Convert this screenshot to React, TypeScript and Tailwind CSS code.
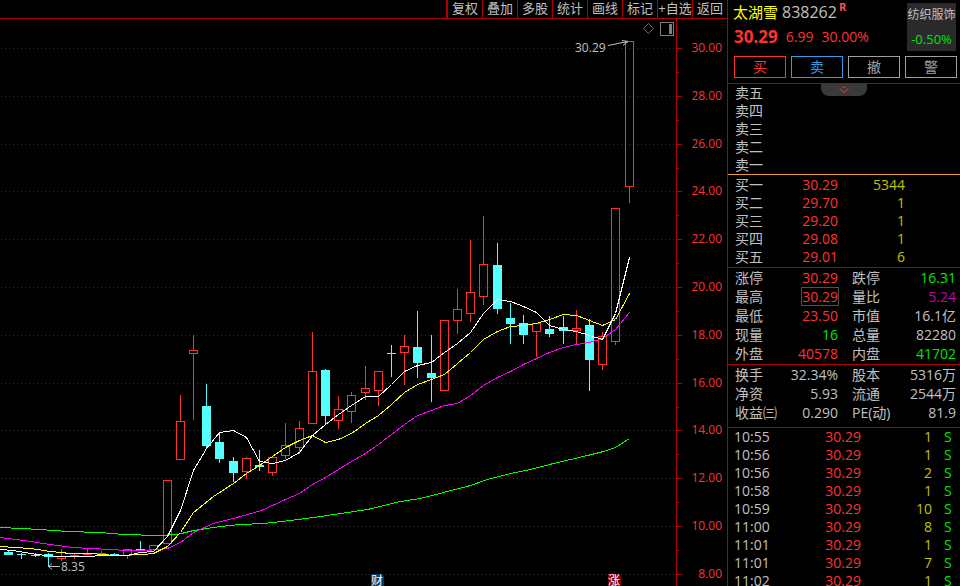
import React from "react";

type Candle = {
  x: number;
  high: number;
  low: number;
  top: number;
  bottom: number;
  up: boolean;
};

type Quote = { label: string; price?: string; volume?: string };

type Stat = { label: string; value: string; color: string; boxed?: boolean };

const UP = "#ff3232";
const DOWN = "#54ffff";
const AXIS = "#b00000";

// x, high, low, body top, body bottom, up
const rawCandles: [number, number, number, number, number, number][] = [
  [8, 551, 555, 552, 555, 0],
  [21, 553, 559, 554, 555, 0],
  [35, 553, 557, 555, 556, 0],
  [48, 553, 567, 554, 557, 0],
  [61, 549, 561, 556, 559, 1],
  [74, 553, 559, 555, 556, 1],
  [87, 549, 555, 554, 555, 1],
  [101, 551, 555, 553, 554, 1],
  [114, 553, 556, 554, 555, 0],
  [127, 549, 559, 549, 556, 1],
  [140, 541, 550, 549, 550, 0],
  [153, 545, 550, 545, 550, 1],
  [167, 480, 544, 480, 544, 1],
  [180, 395, 460, 421, 460, 1],
  [193, 335, 420, 350, 354, 1],
  [206, 384, 448, 406, 446, 0],
  [219, 433, 463, 442, 459, 0],
  [233, 457, 482, 461, 473, 0],
  [246, 457, 479, 458, 472, 1],
  [259, 450, 471, 465, 467, 0],
  [272, 457, 476, 457, 473, 1],
  [285, 423, 459, 445, 456, 1],
  [299, 421, 454, 428, 448, 1],
  [312, 332, 424, 371, 424, 1],
  [325, 369, 424, 370, 416, 0],
  [338, 396, 429, 409, 421, 1],
  [351, 392, 423, 395, 412, 1],
  [365, 366, 400, 388, 393, 1],
  [378, 371, 406, 371, 391, 1],
  [391, 345, 377, 353, 354, 0],
  [404, 335, 385, 346, 353, 1],
  [417, 311, 378, 347, 363, 0],
  [431, 335, 402, 373, 378, 0],
  [444, 320, 391, 320, 391, 1],
  [457, 289, 334, 309, 321, 1],
  [470, 240, 322, 292, 314, 1],
  [483, 216, 305, 264, 297, 1],
  [497, 243, 314, 265, 309, 0],
  [510, 303, 344, 318, 324, 0],
  [523, 315, 344, 323, 335, 0],
  [536, 323, 357, 323, 332, 1],
  [549, 316, 337, 329, 334, 0],
  [563, 316, 344, 327, 331, 0],
  [576, 310, 344, 328, 331, 1],
  [589, 319, 391, 325, 360, 0],
  [602, 332, 370, 336, 365, 1],
  [615, 208, 345, 208, 342, 1],
  [629, 41, 203, 41, 187, 1],
];

const candles: Candle[] = rawCandles.map(([x, high, low, top, bottom, up]) => ({
  x,
  high,
  low,
  top,
  bottom,
  up: up === 1,
}));

const averages = [
  {
    color: "#00ff00",
    points:
      "0,527 40,529 67,531 100,532 123,534 157,535 177,534 193,530 220,526 240,524 263,523 290,520 320,516 340,513 367,509 400,501 420,498 443,492 470,485 487,479 510,473 530,469 553,463 587,455 603,451 615,447 629,438",
  },
  {
    color: "#ff00ff",
    points:
      "0,537 23,540 50,544 72,547 110,549 127,550 147,550 167,548 180,542 193,532 213,523 240,516 261,510 285,499 299,493 312,484 325,477 338,469 351,461 365,453 378,444 391,434 404,424 417,415 431,410 444,405 457,403 470,395 483,385 497,377 510,371 523,364 536,358 549,352 563,347 576,344 589,342 602,338 615,329 629,312",
  },
  {
    color: "#ffff00",
    points:
      "0,546 30,548 50,551 70,553 90,553 114,555 143,554 153,553 167,546 180,532 193,512 213,496 233,483 246,473 259,465 272,456 285,447 299,440 312,435 325,442 338,439 351,433 365,423 378,415 391,404 404,392 417,384 431,379 444,374 457,363 470,352 483,339 497,331 510,326 523,325 536,323 549,319 563,314 576,315 589,320 602,325 615,319 629,293",
  },
  {
    color: "#ffffff",
    points:
      "0,549 13,550 30,553 45,555 60,556 80,556 110,555 127,555 140,552 153,551 167,536 180,510 193,470 206,448 219,432 233,430 246,437 259,461 272,463 285,460 299,452 312,435 325,424 338,414 351,405 365,396 378,396 391,384 404,371 417,365 431,362 444,352 457,343 470,332 483,313 497,299 510,301 523,306 536,312 549,325 563,329 576,331 589,335 602,339 615,313 629,257",
  },
];

const gridLines = [
  { y: 48, label: "30.00" },
  { y: 96, label: "28.00" },
  { y: 144, label: "26.00" },
  { y: 191, label: "24.00" },
  { y: 239, label: "22.00" },
  { y: 287, label: "20.00" },
  { y: 335, label: "18.00" },
  { y: 383, label: "16.00" },
  { y: 430, label: "14.00" },
  { y: 478, label: "12.00" },
  { y: 526, label: "10.00" },
  { y: 574, label: "8.00" },
];

const tools = ["复权", "叠加", "多股", "统计", "画线", "标记", "+自选", "返回"];

const actions = [
  { label: "买", style: "border-[#ff3232] text-[#ff3232]" },
  { label: "卖", style: "border-[#3c96e6] text-[#3c96e6]" },
  { label: "撤", style: "border-[#a0a0a0] text-[#a0a0a0]" },
  { label: "警", style: "border-[#a0a0a0] text-[#a0a0a0]" },
];

const sells: Quote[] = [
  { label: "卖五" },
  { label: "卖四" },
  { label: "卖三" },
  { label: "卖二" },
  { label: "卖一" },
];

const buys: Quote[] = [
  { label: "买一", price: "30.29", volume: "5344" },
  { label: "买二", price: "29.70", volume: "1" },
  { label: "买三", price: "29.20", volume: "1" },
  { label: "买四", price: "29.08", volume: "1" },
  { label: "买五", price: "29.01", volume: "6" },
];

const red = "text-[#ff3232]";
const green = "text-[#00e600]";
const gray = "text-[#c0c0c0]";
const purple = "text-[#c000c0]";

const dayStats: [Stat, Stat][] = [
  [
    { label: "涨停", value: "30.29", color: red },
    { label: "跌停", value: "16.31", color: green },
  ],
  [
    { label: "最高", value: "30.29", color: red, boxed: true },
    { label: "量比", value: "5.24", color: purple },
  ],
  [
    { label: "最低", value: "23.50", color: red },
    { label: "市值", value: "16.1亿", color: gray },
  ],
  [
    { label: "现量", value: "16", color: green },
    { label: "总量", value: "82280", color: gray },
  ],
  [
    { label: "外盘", value: "40578", color: red },
    { label: "内盘", value: "41702", color: green },
  ],
];

const baseStats: [Stat, Stat][] = [
  [
    { label: "换手", value: "32.34%", color: gray },
    { label: "股本", value: "5316万", color: gray },
  ],
  [
    { label: "净资", value: "5.93", color: gray },
    { label: "流通", value: "2544万", color: gray },
  ],
  [
    { label: "收益㈢", value: "0.290", color: gray },
    { label: "PE(动)", value: "81.9", color: gray },
  ],
];

const trades = [
  { time: "10:55", volume: 1 },
  { time: "10:56", volume: 1 },
  { time: "10:56", volume: 2 },
  { time: "10:58", volume: 1 },
  { time: "10:59", volume: 10 },
  { time: "11:00", volume: 8 },
  { time: "11:01", volume: 1 },
  { time: "11:01", volume: 7 },
  { time: "11:02", volume: 1 },
];

function CandleShape({ candle }: { candle: Candle }) {
  const { x, high, low, top, bottom, up } = candle;
  const color = up ? UP : DOWN;
  const height = bottom - top;

  return (
    <g fill={color}>
      {high < top && <rect x={x} y={high} width={1} height={top - high} />}
      {low > bottom && <rect x={x} y={bottom} width={1} height={low - bottom} />}
      {up && height > 2 ? (
        <rect
          x={x - 3.5}
          y={top + 0.5}
          width={8}
          height={height - 1}
          fill="none"
          stroke={color}
        />
      ) : (
        <rect x={x - 4} y={top} width={9} height={height} />
      )}
    </g>
  );
}

function Chart() {
  return (
    <svg
      viewBox="0 19 727 567"
      className="block w-full h-auto text-[12px]"
      role="img"
      aria-label="K线图"
    >
      <g shapeRendering="crispEdges">
        {gridLines.map(({ y }) => (
          <g key={y} stroke={AXIS}>
            <line
              x1={1}
              x2={676}
              y1={y + 0.5}
              y2={y + 0.5}
              strokeDasharray="1 3"
              strokeOpacity={0.9}
            />
            <line x1={676} x2={682} y1={y + 0.5} y2={y + 0.5} />
            <line x1={676} x2={679} y1={y + 24.5} y2={y + 24.5} />
          </g>
        ))}
        <line x1={676.5} x2={676.5} y1={19} y2={586} stroke={AXIS} />
        {candles.map((candle) => (
          <CandleShape key={candle.x} candle={candle} />
        ))}
        {averages.map(({ color, points }) => (
          <polyline
            key={color}
            points={points}
            fill="none"
            stroke={color}
            transform="translate(0.5 0.5)"
          />
        ))}
      </g>

      {/* Price axis */}
      <g fill={UP} textAnchor="end">
        {gridLines.map(({ y, label }) => (
          <text key={y} x={722} y={y + 4}>
            {label}
          </text>
        ))}
      </g>

      {/* High / low marks */}
      <g fill="#c0c0c0">
        <text x={575} y={52}>
          30.29
        </text>
        <text x={61} y={571}>
          8.35
        </text>
      </g>
      <g stroke="#c0c0c0" fill="none">
        <path d="M608 45.5 L628 41.5 M622 40.5 L628 41.5 L623 45.5" />
        <path d="M60 566.5 H48.5 M52 563.5 L48.5 566.5 L52 569.5" />
      </g>

      {/* Event flags */}
      <g textAnchor="middle" fill="#ffffff">
        <path d="M371 574 H382 L384 576 V586 H371 Z" fill="#003a6e" />
        <text x={377} y={585}>
          财
        </text>
        <path d="M608 574 H619 L621 576 V586 H608 Z" fill="#800000" />
        <text x={614} y={585}>
          涨
        </text>
      </g>
    </svg>
  );
}

function QuoteTable({ rows, caption }: { rows: Quote[]; caption: string }) {
  return (
    <table className="w-full table-fixed" aria-label={caption}>
      <tbody>
        {rows.map(({ label, price, volume }) => (
          <tr key={label} className="h-[18px]">
            <th className="w-[56px] p-0 pl-[7px] text-left font-normal">
              {label}
            </th>
            <td className="w-[54px] p-0 text-right text-[#ff3232]">{price}</td>
            <td className="w-[67px] p-0 text-right text-[#c0c000]">{volume}</td>
            <td className="p-0" />
          </tr>
        ))}
      </tbody>
    </table>
  );
}

function StatTable({ rows, caption }: { rows: [Stat, Stat][]; caption: string }) {
  return (
    <table className="w-full table-fixed" aria-label={caption}>
      <tbody>
        {rows.map(([left, right]) => (
          <tr key={left.label} className="h-[19px]">
            <th className="w-[56px] p-0 pl-[7px] text-left font-normal whitespace-nowrap">
              {left.label}
            </th>
            <td className={`w-[54px] p-0 text-right ${left.color}`}>
              {left.boxed ? (
                <span className="inline-block align-top leading-[17px] outline outline-[#505050]">
                  {left.value}
                </span>
              ) : (
                left.value
              )}
            </td>
            <th className="w-[57px] p-0 pl-[14px] text-left font-normal whitespace-nowrap">
              {right.label}
            </th>
            <td className={`p-0 pr-1 text-right ${right.color}`}>
              {right.value}
            </td>
          </tr>
        ))}
      </tbody>
    </table>
  );
}

function QuotePanel() {
  return (
    <aside className="w-[233px] shrink-0 border-l border-[#b00000] text-[14px] leading-[18px]">
      {/* Header */}
      <header className="border-b border-[#b00000] pt-[3px] pr-[3px] pb-[5px] pl-[6px]">
        <div className="flex justify-between pr-px">
          <div>
            <h1 className="-ml-px flex h-[18px] items-center whitespace-nowrap">
              <span className="text-[15px] text-[#ffff00]">太湖雪</span>
              <span className="ml-1 text-[16px]">838262</span>
              <sup className="ml-0.5 text-[11px] font-bold text-[#ff5050]">R</sup>
            </h1>
            <p className="mt-1.5 flex h-5 items-center gap-2 text-[#ff3232]">
              <strong className="text-[17px]">30.29</strong>
              <span>6.99</span>
              <span>30.00%</span>
            </p>
          </div>
          <a
            href="#sector"
            className="flex h-12 w-[49px] flex-col items-center justify-between bg-[#2a2a2c] py-[3px] text-[12px] whitespace-nowrap"
          >
            <span>纺织服饰</span>
            <span className="text-[13px] text-[#00e600]">-0.50%</span>
          </a>
        </div>
        <div className="mt-[5px] grid grid-cols-4 gap-[5px]">
          {actions.map(({ label, style }) => (
            <button
              key={label}
              type="button"
              className={`h-[22px] border leading-5 ${style}`}
            >
              {label}
            </button>
          ))}
        </div>
      </header>

      {/* Order book */}
      <section className="relative border-b border-[#e69a28]">
        <QuoteTable rows={sells} caption="卖盘" />
        <button
          type="button"
          aria-label="展开"
          className="absolute top-0 left-1/2 flex h-3 w-[46px] -translate-x-1/2 justify-center rounded-b-lg bg-[#3a3a3a]"
        >
          <svg width="10" height="10" viewBox="0 0 10 10" fill="none" stroke={UP}>
            <path d="M3.5 2.5 L5 4 L6.5 2.5 M0.5 4.5 L5 8.5 L9.5 4.5" />
          </svg>
        </button>
      </section>
      <section className="border-b border-[#b00000] py-px">
        <QuoteTable rows={buys} caption="买盘" />
      </section>

      {/* Statistics */}
      <section className="border-b border-[#b00000] pb-px">
        <StatTable rows={dayStats} caption="行情" />
      </section>
      <section className="border-b border-[#b00000] pb-[5px]">
        <StatTable rows={baseStats} caption="基本面" />
      </section>

      {/* Trades */}
      <table className="w-full table-fixed" aria-label="分笔成交">
        <tbody>
          {trades.map(({ time, volume }, idx) => (
            <tr key={idx} className="h-[18px]">
              <td className="w-[60px] p-0 pl-[6px]">{time}</td>
              <td className="w-[73px] p-0 text-right text-[#ff3232]">30.29</td>
              <td className="w-[71px] p-0 text-right text-[#c0c000]">{volume}</td>
              <td className="p-0 pl-3 text-[#00e600]">S</td>
            </tr>
          ))}
        </tbody>
      </table>
    </aside>
  );
}

export default function App() {
  return (
    <div className="flex h-screen overflow-hidden bg-black font-['Open_Sans','Noto_Sans_CJK_SC',sans-serif] text-[#c0c0c0]">
      <main className="min-w-0 flex-1">
        <nav className="flex h-[19px] justify-end border-b border-[#b00000] text-[13px] leading-4">
          {tools.map((tool) => (
            <button
              key={tool}
              type="button"
              className="w-[35px] border-l border-[#b00000] pb-[3px] text-center whitespace-nowrap first:w-9 first:border-l-2"
            >
              {tool}
            </button>
          ))}
        </nav>
        <div className="relative">
          <Chart />
          <div className="absolute top-[3px] right-[53px] flex items-center gap-[5px]">
            <button type="button" aria-label="标记点">
              <svg width="12" height="12" viewBox="0 0 12 12" fill="none" stroke="#707070">
                <path d="M5.5 0.5 L10.5 5.5 L5.5 10.5 L0.5 5.5 Z" />
              </svg>
            </button>
            <button type="button" aria-label="侧栏">
              <svg width="14" height="14" viewBox="0 0 14 14" fill="none" stroke="#808080">
                <rect x="0.5" y="0.5" width="13" height="13" />
                <rect x="9" y="2" width="3" height="10" fill="#808080" stroke="none" />
              </svg>
            </button>
          </div>
        </div>
      </main>
      <QuotePanel />
    </div>
  );
}
